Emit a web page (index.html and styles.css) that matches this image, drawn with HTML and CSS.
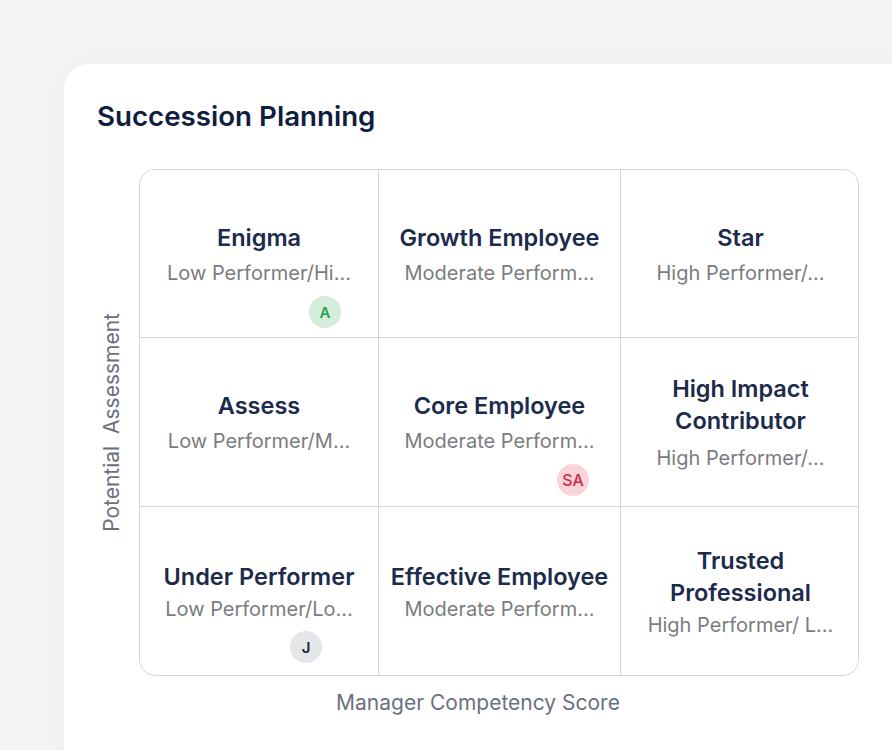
FILE: index.html
```html
<!DOCTYPE html>
<html lang="en">
<head>
<meta charset="utf-8">
<title>Succession Planning</title>
<link rel="stylesheet" href="styles.css">
</head>
<body>
<div class="card">
  <h1 class="card-title">Succession Planning</h1>
  <div class="chart">
    <div class="y-axis"><span>Potential&nbsp; Assessment</span></div>
    <div class="grid">
      <div class="cell">
        <div class="cell-title">Enigma</div>
        <div class="cell-sub">Low Performer/Hi…</div>
        <span class="badge badge-green badge-enigma">A</span>
      </div>
      <div class="cell">
        <div class="cell-title">Growth Employee</div>
        <div class="cell-sub">Moderate Perform…</div>
      </div>
      <div class="cell">
        <div class="cell-title">Star</div>
        <div class="cell-sub">High Performer/…</div>
      </div>
      <div class="cell">
        <div class="cell-title">Assess</div>
        <div class="cell-sub">Low Performer/M…</div>
      </div>
      <div class="cell">
        <div class="cell-title">Core Employee</div>
        <div class="cell-sub">Moderate Perform…</div>
        <span class="badge badge-red badge-core">SA</span>
      </div>
      <div class="cell cell-loose">
        <div class="cell-title">High Impact<br>Contributor</div>
        <div class="cell-sub">High Performer/…</div>
      </div>
      <div class="cell cell-tight">
        <div class="cell-title">Under Performer</div>
        <div class="cell-sub">Low Performer/Lo…</div>
        <span class="badge badge-gray badge-under">J</span>
      </div>
      <div class="cell cell-tight">
        <div class="cell-title">Effective Employee</div>
        <div class="cell-sub">Moderate Perform…</div>
      </div>
      <div class="cell cell-tight">
        <div class="cell-title">Trusted<br>Professional</div>
        <div class="cell-sub">High Performer/ L…</div>
      </div>
    </div>
  </div>
  <div class="x-axis">Manager Competency Score</div>
</div>
</body>
</html>
```

FILE: styles.css
```css
html, body {
  margin: 0;
  padding: 0;
}
body {
  background: #f4f4f5;
  font-family: Inter, "Noto Sans", "Liberation Sans", sans-serif;
  width: 892px;
  height: 750px;
  overflow: hidden;
}
.card {
  margin: 64px 0 0 64px;
  width: 900px;
  height: 760px;
  background: #ffffff;
  border-radius: 24px;
  box-shadow: 0 0 28px rgba(0, 0, 0, 0.04);
  padding: 35px 0 0 33px;
  box-sizing: border-box;
}
.card-title {
  margin: 0;
  font-size: 27.7px;
  line-height: 34px;
  font-weight: 600;
  color: #0f1e3e;
}
.chart {
  display: flex;
  margin-top: 36px;
}
.y-axis {
  width: 42px;
  display: flex;
  align-items: center;
  justify-content: flex-start;
}
.y-axis span {
  writing-mode: vertical-rl;
  transform: rotate(180deg);
  font-size: 21px;
  line-height: 26px;
  color: #6b7080;
  white-space: pre;
  padding-right: 2px;
}
.grid {
  width: 720px;
  height: 507px;
  box-sizing: border-box;
  display: grid;
  grid-template-columns: 238px 241px 239px;
  grid-template-rows: 167px 168px 169px;
  gap: 1px;
  background: #d4d7da;
  border: 1px solid #d4d7da;
  border-radius: 16px;
  overflow: hidden;
}
.cell {
  position: relative;
  background: #ffffff;
  display: flex;
  flex-direction: column;
  align-items: center;
  justify-content: center;
  text-align: center;
}
.cell-title {
  font-size: 23.5px;
  line-height: 32px;
  font-weight: 600;
  color: #1c2a4c;
}
.cell-sub {
  margin-top: 6px;
  font-size: 20px;
  line-height: 26px;
  color: #7b7c7e;
  white-space: nowrap;
}
.cell-loose .cell-sub {
  margin-top: 8px;
}
.cell-tight .cell-sub {
  margin-top: 3px;
}
.badge {
  position: absolute;
  top: 126px;
  width: 32px;
  height: 32px;
  border-radius: 50%;
  display: flex;
  align-items: center;
  justify-content: center;
  font-size: 15px;
  font-weight: 600;
}
.badge-green {
  background: #d4ecda;
  color: #2b9e4c;
}
.badge-red {
  background: #f8d4da;
  color: #cf2a40;
  font-weight: 500;
  font-size: 16px;
}
.badge-gray {
  background: #e4e6ea;
  color: #1c2436;
}
.badge-enigma { left: 169px; }
.badge-core { left: 178px; }
.badge-under { left: 150px; top: 124px; }
.x-axis {
  width: 762px;
  text-align: center;
  margin-top: 14px;
  font-size: 21px;
  line-height: 26px;
  color: #6b7080;
}
```
